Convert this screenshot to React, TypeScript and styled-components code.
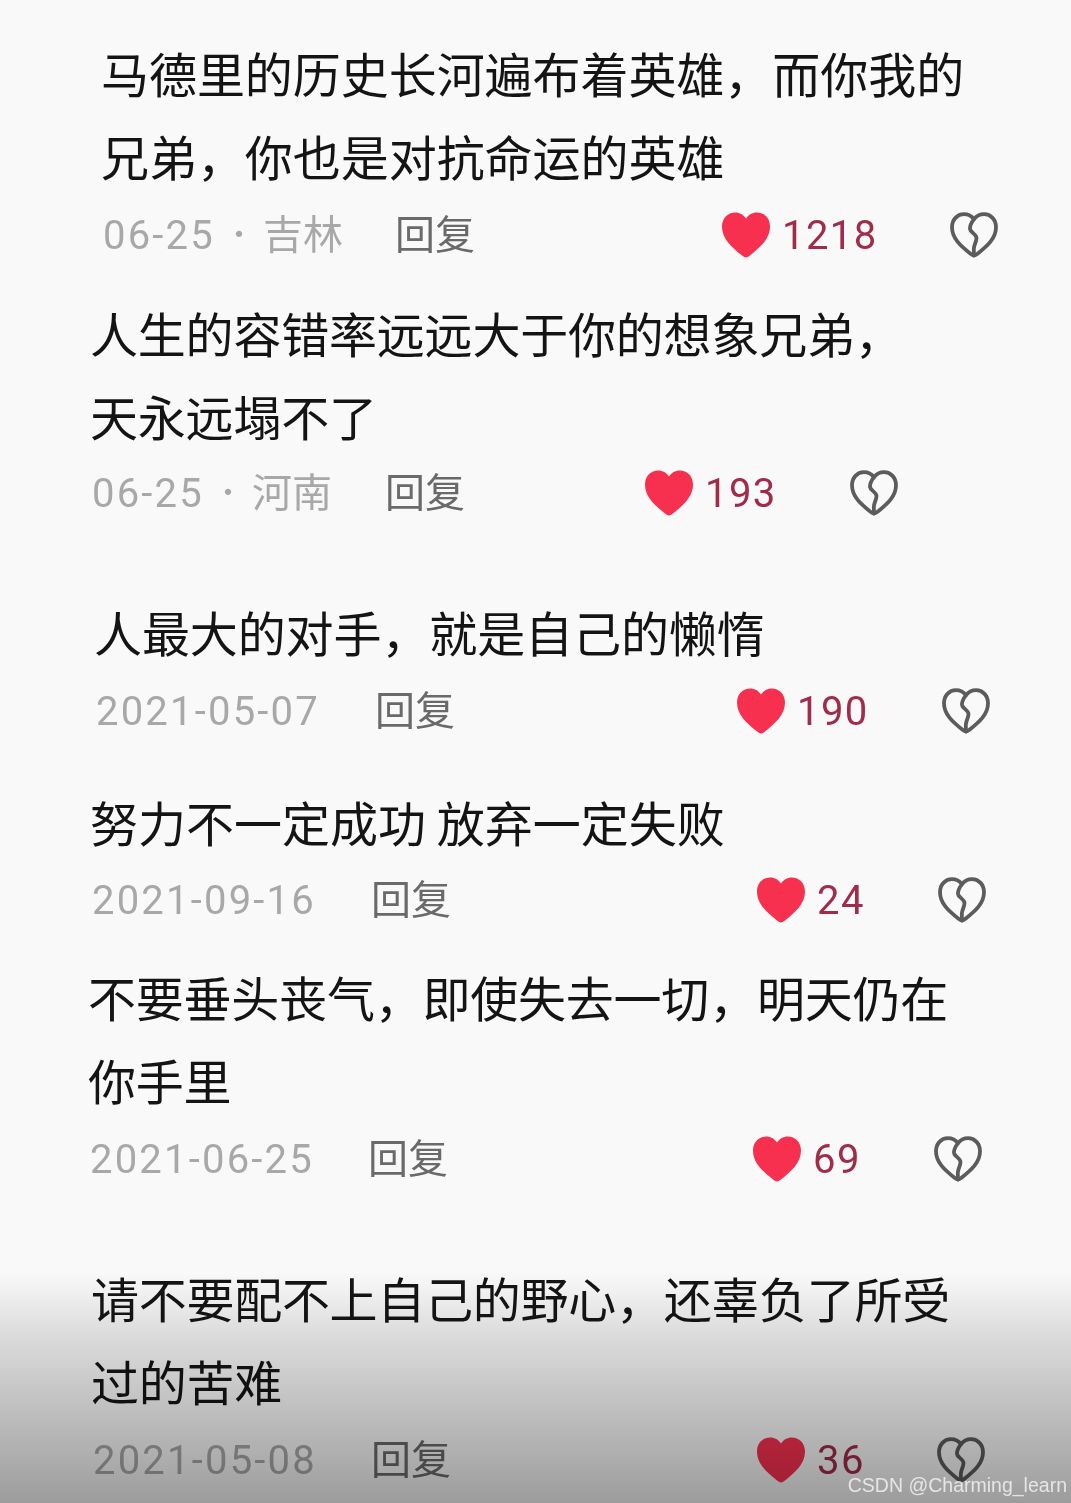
import React from "react";
import styled, { createGlobalStyle } from "styled-components";

const Global = createGlobalStyle`
  html, body { margin: 0; padding: 0; background: #f9f9f9; }
  body { font-family: "Noto Sans CJK SC", "Noto Sans", sans-serif; }
`;

const Page = styled.main`
  position: relative;
  width: 1071px;
  height: 1503px;
  overflow: hidden;
  background: #f9f9f9;
  padding-top: 31px;
  box-sizing: border-box;
`;

const Comment = styled.article<{ $left: number; $top: number }>`
  margin-left: ${(p) => p.$left}px;
  margin-top: ${(p) => p.$top}px;
`;

const Body = styled.p<{ $track: number }>`
  margin: 0;
  font-size: 48px;
  line-height: 83px;
  letter-spacing: ${(p) => p.$track}px;
  color: #141414;
  white-space: pre;
`;

const Meta = styled.div<{ $shift: number }>`
  display: flex;
  align-items: center;
  height: 70px;
  margin-top: ${(p) => p.$shift}px;
  font-size: 40px;
`;

const DateCell = styled.div<{ $width: number }>`
  width: ${(p) => p.$width}px;
  flex: none;
  display: flex;
  align-items: center;
  color: #a8a8a8;
`;

const Stamp = styled.span`
  font-family: Roboto, sans-serif;
  letter-spacing: 2.2px;
  margin-left: 2px;
  padding-top: 6px;
`;

const Dot = styled.span`
  width: 48px;
  text-align: center;
  font-size: 30px;
`;

const Region = styled.span`
  font-family: "Noto Sans CJK SC", sans-serif;
`;

const Reply = styled.div<{ $width: number }>`
  width: ${(p) => p.$width}px;
  flex: none;
  color: #6a6a6a;
`;

const Like = styled.div<{ $width: number }>`
  width: ${(p) => p.$width}px;
  flex: none;
  display: flex;
  align-items: center;
  gap: 12px;
  color: #a02c4a;
`;

const Count = styled.span`
  font-family: Roboto, sans-serif;
  letter-spacing: 1.4px;
  padding-top: 6px;
`;

const Icon = styled.svg`
  flex: none;
  margin-top: 6px;
`;

const Overlay = styled.div`
  position: absolute;
  left: 0;
  right: 0;
  bottom: 0;
  height: 230px;
  pointer-events: none;
  mix-blend-mode: multiply;
  background: linear-gradient(to bottom, #ffffff 0%, #dedede 30%, #c2c2c2 62%, #a0a0a0 100%);
`;

const Watermark = styled.div`
  position: absolute;
  right: 4px;
  bottom: 4px;
  font-family: "Liberation Sans", Arial, sans-serif;
  font-size: 19.5px;
  line-height: 28px;
  color: rgba(255, 255, 255, 0.72);
`;

const Heart = () => (
  <Icon as="svg" width="48" height="46" viewBox="0 0 48 46" fill="#f7304f">
    <path d="M24 45.5C22.8 45.5 21.6 44.8 20 43.5C10 35.5 0 27 0 14.5C0 6 6 0.5 13.2 0.5C17.8 0.5 21.6 2.8 24 6.6C26.4 2.8 30.2 0.5 34.8 0.5C42 0.5 48 6 48 14.5C48 27 38 35.5 28 43.5C26.4 44.8 25.2 45.5 24 45.5Z" />
  </Icon>
);

const BrokenHeart = () => (
  <Icon as="svg" width="48" height="46" viewBox="0 0 48 46" fill="none" stroke="#5c5c5c" strokeWidth="3.8" strokeLinecap="round" strokeLinejoin="round">
    <path d="M24 43.5C22.9 43.5 21.9 42.9 20.5 41.8C11 34.2 2 26.6 2 15.2C2 7.6 7.3 2.2 13.8 2.2C17.8 2.2 21.3 3.6 24 7.2C26.7 3.6 30.2 2.2 34.2 2.2C40.7 2.2 46 7.6 46 15.2C46 26.6 37 34.2 27.5 41.8C26.1 42.9 25.1 43.5 24 43.5Z" />
    <path d="M24 7.2C21.5 10.5 19.8 14 20 17C20.3 20.5 26.5 22 26.5 26C26.5 30 23.8 33 23.8 37L24 43.5" />
  </Icon>
);

const data = [
  { left: 101, top: 0, shift: 0, track: -0.05, lines: "马德里的历史长河遍布着英雄，而你我的\n兄弟，你也是对抗命运的英雄", date: "06-25", region: "吉林", reply: 395, heart: 722, broken: 950, likes: "1218" },
  { left: 90, top: 24, shift: -2, track: -0.2, lines: "人生的容错率远远大于你的想象兄弟，\n天永远塌不了", date: "06-25", region: "河南", reply: 385, heart: 645, broken: 850, likes: "193" },
  { left: 94, top: 65, shift: 0, track: -0.1, lines: "人最大的对手，就是自己的懒惰", date: "2021-05-07", reply: 375, heart: 737, broken: 942, likes: "190" },
  { left: 90, top: 37, shift: -1, track: 0, lines: "努力不一定成功 放弃一定失败", date: "2021-09-16", reply: 371, heart: 757, broken: 938, likes: "24" },
  { left: 88, top: 23, shift: 0, track: -0.22, lines: "不要垂头丧气，即使失去一切，明天仍在\n你手里", date: "2021-06-25", reply: 368, heart: 753, broken: 934, likes: "69" },
  { left: 91, top: 65, shift: 0, track: -0.28, lines: "请不要配不上自己的野心，还辜负了所受\n过的苦难", date: "2021-05-08", reply: 371, heart: 757, broken: 937, likes: "36" },
];

export default function App() {
  return (
    <Page>
      <Global />
      {data.map((c) => (
        <Comment key={c.date + c.likes} $left={c.left} $top={c.top}>
          <Body $track={c.track}>{c.lines}</Body>
          <Meta $shift={c.shift}>
            <DateCell $width={c.reply - c.left}>
              <Stamp>{c.date}</Stamp>
              {c.region && <Dot>·</Dot>}
              {c.region && <Region>{c.region}</Region>}
            </DateCell>
            <Reply $width={c.heart - c.reply}>回复</Reply>
            <Like $width={c.broken - c.heart}>
              <Heart />
              <Count>{c.likes}</Count>
            </Like>
            <BrokenHeart />
          </Meta>
        </Comment>
      ))}
      <Overlay />
      <Watermark>CSDN @Charming_learn</Watermark>
    </Page>
  );
}
